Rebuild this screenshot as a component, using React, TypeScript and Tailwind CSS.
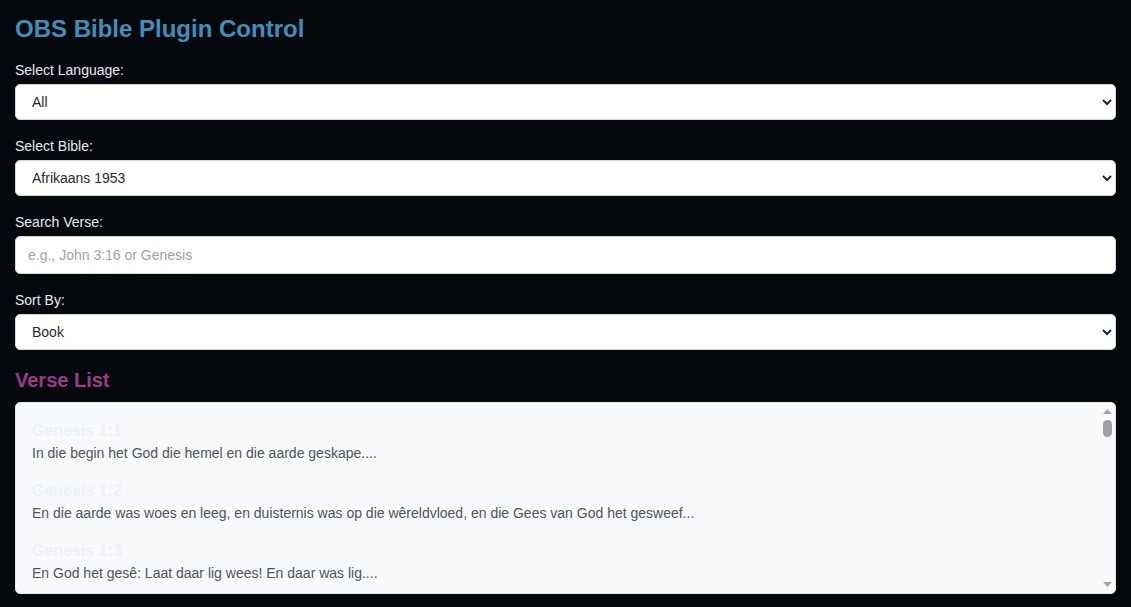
import { useState } from "react";

const verses = [
  { ref: "Genesis 1:1", text: "In die begin het God die hemel en die aarde geskape...." },
  {
    ref: "Genesis 1:2",
    text: "En die aarde was woes en leeg, en duisternis was op die wêreldvloed, en die Gees van God het gesweef...",
  },
  { ref: "Genesis 1:3", text: "En God het gesê: Laat daar lig wees! En daar was lig...." },
  { ref: "Genesis 1:4", text: "En God het gesien dat die lig goed was, en God het skeiding gemaak tussen die lig en die duisternis...." },
  { ref: "Genesis 1:5", text: "En God het die lig dag genoem en die duisternis nag...." },
  { ref: "Genesis 1:6", text: "Verder het God gesê: Laat daar 'n uitspansel wees in die middel van die waters...." },
];

function Field({ label, children }: { label: string; children: React.ReactNode }) {
  return (
    <div className="mb-4">
      <label className="mb-1 block text-[14px] leading-5 text-[#e8eaed]">{label}</label>
      {children}
    </div>
  );
}

const selectClass =
  "block h-9 w-full rounded-[5px] border border-[#d1d5db] bg-white px-3 text-[14px] text-[#1f2937] outline-none";

export default function App() {
  const [language, setLanguage] = useState("all");
  const [bible, setBible] = useState("af1953");
  const [search, setSearch] = useState("");
  const [sort, setSort] = useState("book");

  return (
    <div
      className="min-h-screen bg-[#05090d] px-[15px] py-[15px]"
      style={{ fontFamily: '"Liberation Sans", Arial, sans-serif' }}
    >
      <h1 className="mb-[17px] text-[24px] font-bold leading-7 text-[#3f8fb9]">OBS Bible Plugin Control</h1>

      <Field label="Select Language:">
        <select className={selectClass} value={language} onChange={(e) => setLanguage(e.target.value)}>
          <option value="all">All</option>
          <option value="af">Afrikaans</option>
          <option value="en">English</option>
        </select>
      </Field>

      <Field label="Select Bible:">
        <select className={selectClass} value={bible} onChange={(e) => setBible(e.target.value)}>
          <option value="af1953">Afrikaans 1953</option>
          <option value="kjv">King James Version</option>
        </select>
      </Field>

      <Field label="Search Verse:">
        <input
          type="text"
          value={search}
          onChange={(e) => setSearch(e.target.value)}
          placeholder="e.g., John 3:16 or Genesis"
          className="block h-[38px] w-full rounded-[5px] border border-[#d1d5db] bg-white px-3 text-[14px] text-[#1f2937] outline-none placeholder:text-[#9ca3af]"
        />
      </Field>

      <Field label="Sort By:">
        <select className={selectClass} value={sort} onChange={(e) => setSort(e.target.value)}>
          <option value="book">Book</option>
          <option value="chapter">Chapter</option>
        </select>
      </Field>

      <h2 className="mb-2 text-[20px] font-bold leading-7 text-[#9b3c8a]">Verse List</h2>

      <div className="relative h-[192px] overflow-hidden rounded-[5px] border border-[#e5e7eb] bg-[#f8f9fb]">
        <div className="h-full overflow-y-auto px-4 pr-[30px] pt-4 [scrollbar-width:none] [&::-webkit-scrollbar]:hidden">
          {verses.map((v) => (
            <div key={v.ref} className="mb-4">
              <h3 className="text-[16px] font-bold leading-6 text-[#edf1f5]">{v.ref}</h3>
              <p className="text-[14px] leading-5 text-[#4b5563]">{v.text}</p>
            </div>
          ))}
        </div>

        {/* scrollbar overlay */}
        <div className="absolute right-0 top-0 bottom-0 flex w-[15px] flex-col items-center bg-[#fafafa] py-[6px]">
          <svg width="9" height="5" viewBox="0 0 9 5" className="shrink-0">
            <path d="M4.5 0 L9 5 L0 5 Z" fill="#a3a3a3" />
          </svg>
          <div className="mt-[6px] h-[17px] w-[9px] shrink-0 rounded-full bg-[#a0a0a0]" />
          <div className="flex-1" />
          <svg width="9" height="5" viewBox="0 0 9 5" className="shrink-0">
            <path d="M0 0 L9 0 L4.5 5 Z" fill="#a3a3a3" />
          </svg>
        </div>
      </div>
    </div>
  );
}
